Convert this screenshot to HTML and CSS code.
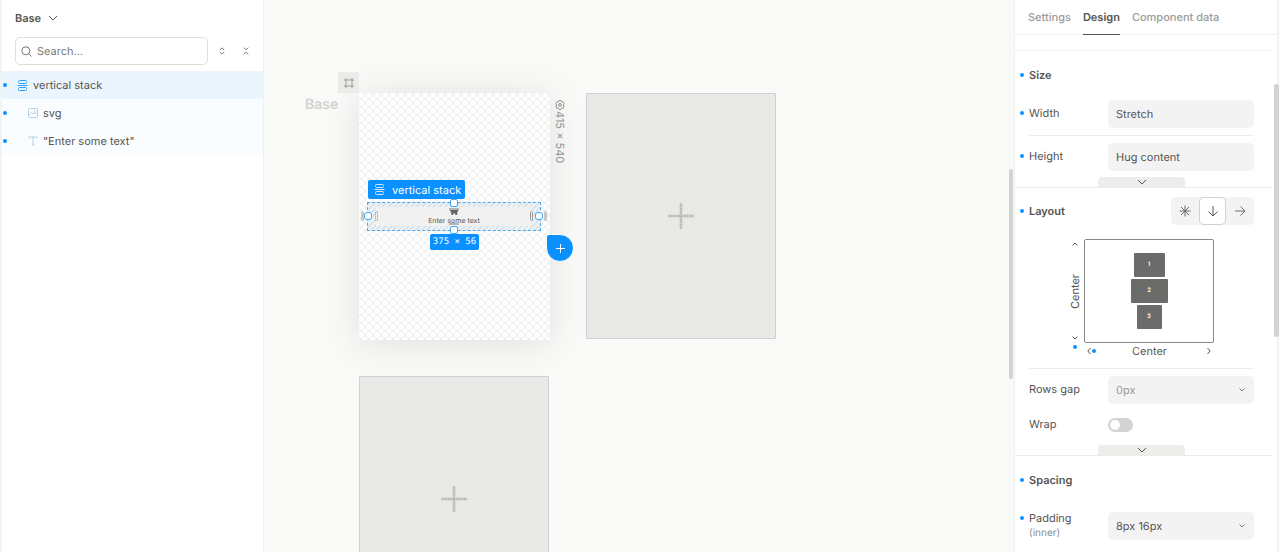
FILE: index.html
```html
<!DOCTYPE html>
<html lang="en">
<head>
    <meta charset="utf-8">
    <title>Component editor</title>
    <link rel="stylesheet" href="styles.css">
</head>
<body>
    <div class="editor">
        <aside class="tree-panel">
            <button class="base-button" type="button">
                Base
                <svg width="10" height="6" viewBox="0 0 10 6"><path d="M1 1l4 4 4-4"/></svg>
            </button>

            <div class="search-row">
                <label class="search-box">
                    <svg width="11" height="11" viewBox="0 0 11 11"><circle cx="4.8" cy="4.8" r="4"/><path d="M7.8 7.8l2.7 2.7"/></svg>
                    <input type="text" placeholder="Search..." aria-label="Search">
                </label>
                <button type="button" class="icon-button" aria-label="Expand all">
                    <svg width="6" height="8" viewBox="0 0 6 8"><path d="M.8 3L3 .8 5.200 3M.8 5L3 7.200 5.200 5"/></svg>
                </button>
                <button type="button" class="icon-button" aria-label="Collapse all">
                    <svg width="6" height="8" viewBox="0 0 6 8"><path d="M.8.6L3 2.800 5.200.6M.8 7.400L3 5.200l2.200 2.200"/></svg>
                </button>
            </div>

            <ul class="tree">
                <li class="tree-item selected">
                    <svg width="11" height="11" viewBox="0 0 11 11"><rect x="1.500" y=".5" width="8" height="3" rx="1"/><rect x="1.500" y="7.500" width="8" height="3" rx="1"/><path d="M.5 5.500h10"/></svg>
                    vertical stack
                </li>
                <li class="tree-item child">
                    <svg width="10" height="10" viewBox="0 0 10 10"><rect x=".5" y=".5" width="9" height="9" rx="1"/><path d="M1 7l2.500-2.500L5 6l2-1.500L9 6"/><path d="M6 3h1.500"/></svg>
                    svg
                </li>
                <li class="tree-item child">
                    <svg width="10" height="10" viewBox="0 0 10 10"><path d="M1 2.500V1h8v1.500M5 1v8M3.500 9h3"/></svg>
                    "Enter some text"
                </li>
            </ul>
        </aside>

        <main class="canvas">
            <div class="artboard">
                <div class="selection">
                    <div class="selection-fill"></div>
                    <svg class="paw" width="10" height="7" viewBox="0 0 10 7"><path d="M0 1h10L8.500 4 8 7H6.500L6 5.500H4.500L4 7H2.500L2 4z"/></svg>
                    <span class="selection-text">Enter some text</span>
                    <i class="spacer top"></i>
                    <i class="spacer bottom"></i>
                    <i class="margin-bar left"></i>
                    <i class="margin-bar right"></i>
                    <i class="padding-bar left"></i>
                    <i class="padding-bar right"></i>
                    <i class="handle top"></i>
                    <i class="handle bottom"></i>
                    <i class="handle left"></i>
                    <i class="handle right"></i>
                </div>
                <div class="selection-label">
                    <svg width="11" height="11" viewBox="0 0 11 11"><rect x="1.500" y=".5" width="8" height="3" rx="1"/><rect x="1.500" y="7.500" width="8" height="3" rx="1"/><path d="M.5 5.500h10"/></svg>
                    vertical stack
                </div>
                <div class="selection-size">375 × 56</div>
                <button type="button" class="add-button" aria-label="Add">
                    <svg width="9" height="9" viewBox="0 0 9 9"><path d="M4.500 0v9M0 4.500h9"/></svg>
                </button>
            </div>

            <div class="frame-icon">
                <svg width="10" height="10" viewBox="0 0 10 10"><path d="M2 0v10M8 0v10M0 2h10M0 8h10"/></svg>
            </div>
            <div class="frame-name">Base</div>

            <div class="frame-size">
                <svg width="10" height="10" viewBox="0 0 10 10"><path d="M4 .6h2l.5 1.200 1.600-.1 1 1.700L8.300 5l.8 1.600-1 1.700-1.600-.1L6 9.400H4l-.5-1.200-1.600.1-1-1.700L1.700 5 .9 3.400l1-1.700 1.600.1z"/><circle cx="5" cy="5" r="1.400"/></svg>
                <span>415 × 540</span>
            </div>

            <button type="button" class="empty-frame first" aria-label="Add breakpoint">
                <svg width="26" height="26" viewBox="0 0 26 26"><path class="wide" d="M13 0v26M0 13h26"/><path class="dots" d="M13 1v25M1 13h25"/></svg>
            </button>
            <button type="button" class="empty-frame second" aria-label="Add breakpoint">
                <svg width="26" height="26" viewBox="0 0 26 26"><path class="wide" d="M13 0v26M0 13h26"/><path class="dots" d="M13 1v25M1 13h25"/></svg>
            </button>
            <div class="canvas-scroll"></div>
        </main>

        <aside class="props-panel">
            <nav class="tabs">
                <button type="button">Settings</button>
                <button type="button" class="active">Design</button>
                <button type="button">Component data</button>
            </nav>
            <div class="panel-top"></div>

            <section class="section">
                <h2 class="title changed">Size</h2>
                <div class="row">
                    <label class="changed" for="width">Width</label>
                    <input class="field" id="width" type="text" value="Stretch">
                </div>
                <hr>
                <div class="row">
                    <label class="changed" for="height">Height</label>
                    <input class="field" id="height" type="text" value="Hug content">
                </div>
                <button type="button" class="more" aria-label="More size options">
                    <svg width="10" height="6" viewBox="0 0 10 6"><path d="M1 1l4 4 4-4"/></svg>
                </button>
            </section>

            <section class="section">
                <div class="layout-head">
                    <h2 class="title changed">Layout</h2>
                    <div class="segment">
                        <button type="button" aria-label="Absolute">
                            <svg width="12" height="12" viewBox="0 0 12 12"><path d="M6 .5v11M.5 6h11M2 2l8 8M10 2l-8 8"/></svg>
                        </button>
                        <button type="button" class="active" aria-label="Vertical">
                            <svg width="12" height="12" viewBox="0 0 12 12"><path d="M6 1v10M1.500 6.500L6 11l4.500-4.500"/></svg>
                        </button>
                        <button type="button" aria-label="Horizontal">
                            <svg width="12" height="12" viewBox="0 0 12 12"><path d="M1 6h10M6.500 1.500L11 6l-4.500 4.500"/></svg>
                        </button>
                    </div>
                </div>

                <div class="align">
                    <div class="align-vertical">
                        <svg width="6" height="4" viewBox="0 0 6 4"><path d="M.5 3.500L3 1l2.500 2.500"/></svg>
                        <span>Center</span>
                        <svg width="6" height="4" viewBox="0 0 6 4"><path d="M.5.5L3 3 5.500.5"/></svg>
                    </div>
                    <div class="align-box">
                        <span class="block one">1</span>
                        <span class="block two">2</span>
                        <span class="block three">3</span>
                    </div>
                    <i class="dot"></i>
                    <div class="align-horizontal">
                        <svg width="4" height="8" viewBox="0 0 4 8"><path d="M3.500 1L.8 4l2.700 3"/></svg>
                        <i class="dot"></i>
                        <span>Center</span>
                        <svg width="4" height="8" viewBox="0 0 4 8"><path d="M.5 1l2.700 3L.5 7"/></svg>
                    </div>
                </div>
                <hr>
                <div class="row">
                    <label for="gap">Rows gap</label>
                    <select class="field muted" id="gap"><option>0px</option></select>
                    <svg class="arrow" width="6" height="4" viewBox="0 0 6 4"><path d="M.5.5L3 3 5.500.5"/></svg>
                </div>
                <div class="row wrap-row">
                    <label for="wrap">Wrap</label>
                    <input class="switch" id="wrap" type="checkbox">
                </div>
                <button type="button" class="more" aria-label="More layout options">
                    <svg width="10" height="6" viewBox="0 0 10 6"><path d="M1 1l4 4 4-4"/></svg>
                </button>
            </section>

            <section class="section">
                <h2 class="title changed">Spacing</h2>
                <div class="row padding-row">
                    <label class="changed" for="padding">Padding <small>(inner)</small></label>
                    <select class="field" id="padding"><option>8px 16px</option></select>
                    <svg class="arrow" width="6" height="4" viewBox="0 0 6 4"><path d="M.5.5L3 3 5.500.5"/></svg>
                </div>
            </section>
            <div class="panel-scroll"></div>
        </aside>
    </div>
</body>
</html>
```

FILE: styles.css
```css
* {
    box-sizing: border-box;
}
body {
    margin: 0;
    font-family: Inter, "Liberation Sans", sans-serif;
    font-size: 11px;
    line-height: 16px;
    text-rendering: geometricPrecision;
    color: #555553;
    background: #fff;
}
button, input, select {
    font: inherit;
    color: inherit;
    text-rendering: inherit;
    margin: 0;
    padding: 0;
    border: 0;
    background: none;
}
svg {
    display: block;
    flex: none;
    fill: none;
    stroke: currentColor;
}
.editor {
    display: flex;
    height: 100vh;
    overflow: hidden;
}

/* left panel */
.tree-panel {
    flex: none;
    width: 264px;
    border-left: 2px solid #f3f3f2;
    border-right: 1px solid #f1f1f0;
}
.base-button {
    display: flex;
    align-items: center;
    gap: 7px;
    margin: 10px 0 11px 13px;
    font-weight: 600;
}
.search-row {
    display: flex;
    align-items: center;
    gap: 10px;
    padding: 0 10px 0 13px;
    margin-bottom: 6px;
}
.search-box {
    display: flex;
    flex: 1;
    align-items: center;
    gap: 5px;
    height: 28px;
    margin-right: -3px;
    padding: 0 5px;
    border: 1px solid #dededc;
    border-radius: 5px;
    color: #777775;
}
.search-box input {
    flex: 1;
    width: 0;
    outline: 0;
}
.search-box input::placeholder {
    color: #777775;
}
.icon-button {
    display: flex;
    justify-content: center;
    width: 14px;
    color: #777775;
}
.tree {
    margin: 0;
    padding: 0;
    list-style: none;
}
.tree-item {
    display: flex;
    align-items: center;
    gap: 5px;
    height: 28px;
    background: #fafdff;
}
.tree-item::before {
    content: "";
    width: 4px;
    height: 4px;
    margin: 0 5px 0 1px;
    border-radius: 50%;
    background: #0b91ff;
}
.tree-item svg {
    color: #b4d1e5;
}
.tree-item.child::before {
    margin-right: 16px;
}
.tree-item.selected {
    background: #ebf5fe;
}
.tree-item.selected svg {
    color: #2c9fff;
}

/* canvas */
.canvas {
    position: relative;
    flex: 1;
    overflow: hidden;
    background: #f9f9f8;
}
.frame-icon {
    position: absolute;
    left: 74px;
    top: 72px;
    display: flex;
    align-items: center;
    justify-content: center;
    width: 21px;
    height: 21px;
    border-radius: 2px 2px 0 0;
    background: #ebebea;
    color: #9b9b99;
}
.frame-name {
    position: absolute;
    left: 41px;
    top: 97px;
    font-size: 14px;
    font-weight: 600;
    color: #d3d3d1;
}
.artboard {
    position: absolute;
    left: 95px;
    top: 93px;
    width: 191px;
    height: 247px;
    background: repeating-conic-gradient(#f3f3f3 0 25%, #fff 0 50%) 0 0 / 8px 8px;
    box-shadow: 0 3px 32px rgba(0, 0, 0, 0.1);
}
.frame-size {
    position: absolute;
    left: 288px;
    top: 100px;
    display: flex;
    flex-direction: column;
    align-items: center;
    gap: 1px;
    width: 16px;
    color: #929290;
}
.frame-size span {
    writing-mode: vertical-rl;
    text-orientation: sideways;
}
.selection {
    position: absolute;
    left: 8px;
    top: 109px;
    width: 174px;
    height: 29px;
    border: 1px dashed #4aabf5;
    background: repeating-linear-gradient(135deg, #dce5eb 0 2px, #f0f1f1 2px 4px);
}
.selection-fill {
    position: absolute;
    inset: 4px 8px;
    background: #f1f1f1;
}
.paw {
    position: absolute;
    left: 81px;
    top: 5px;
    fill: #666664;
    stroke: none;
}
.selection-text {
    position: absolute;
    left: 0;
    right: 0;
    top: 13px;
    font-size: 7px;
    line-height: 10px;
    text-align: center;
}
.handle, .spacer, .margin-bar, .padding-bar {
    position: absolute;
}
.handle {
    width: 8px;
    height: 8px;
    border: 1px solid #3fa7f8;
    border-radius: 3px;
    background: #fff;
}
.handle.top, .handle.bottom {
    left: 82px;
    border-radius: 2px;
}
.handle.top {
    top: -4px;
}
.handle.bottom {
    bottom: -4px;
}
.handle.left {
    left: -4px;
    top: 9px;
}
.handle.right {
    right: -3px;
    top: 9px;
}
.spacer {
    left: 81px;
    width: 10px;
    height: 14px;
    border: solid #b4b4b2;
    border-width: 2px 0;
    border-radius: 1px;
}
.spacer.top {
    top: -7px;
}
.spacer.bottom {
    bottom: -7px;
}
.margin-bar {
    top: 8px;
    width: 3px;
    height: 10px;
    border-radius: 2px;
    background: #c7c7c5;
}
.margin-bar.left {
    left: -7px;
}
.margin-bar.right {
    right: -7px;
}
.padding-bar {
    top: 8px;
    width: 3px;
    height: 10px;
    border: 1px solid #969694;
    border-radius: 2px;
}
.padding-bar.left {
    left: 7px;
    border-style: dotted;
}
.padding-bar.right {
    right: 7px;
}
.selection-label {
    position: absolute;
    left: 9px;
    top: 87px;
    display: flex;
    align-items: center;
    gap: 7px;
    height: 19px;
    padding: 0 4px 0 6px;
    border-radius: 2px;
    background: #0b91ff;
    color: #fff;
    white-space: nowrap;
}
.selection-label svg {
    opacity: 0.8;
}
.selection-size {
    position: absolute;
    left: 71px;
    top: 141px;
    width: 49px;
    border-radius: 2px;
    background: #0b91ff;
    color: #fff;
    font-family: "DejaVu Sans Mono", monospace;
    font-size: 9px;
    text-align: center;
    white-space: nowrap;
}
.add-button {
    position: absolute;
    left: 187px;
    top: 141px;
    display: flex;
    align-items: center;
    justify-content: center;
    width: 28px;
    height: 28px;
    border: 1px solid #fff;
    border-radius: 3px 50% 50% 50%;
    background: #0b91ff;
    color: #fff;
}
.empty-frame {
    position: absolute;
    display: flex;
    align-items: center;
    justify-content: center;
    width: 190px;
    height: 246px;
    border: 1px solid #cfd1d0;
    border-radius: 1px;
    background: #e9e9e8;
}
.empty-frame.first {
    left: 322px;
    top: 93px;
}
.empty-frame.second {
    left: 95px;
    top: 376px;
}
.empty-frame .wide {
    stroke: #d0d0ce;
    stroke-width: 3;
}
.empty-frame .dots {
    stroke: #969694;
    stroke-dasharray: 1 1;
}
.canvas-scroll {
    position: absolute;
    right: 1px;
    top: 169px;
    width: 4px;
    height: 210px;
    border-radius: 2px;
    background: #d3d3d2;
}

/* right panel */
.props-panel {
    position: relative;
    flex: none;
    width: 266px;
    padding-right: 3px;
    border-left: 1px solid #f1f1f0;
    background: linear-gradient(to left, #fafafa 2px, #eeeeed 2px 3px, #fff 3px);
}
.tabs {
    display: flex;
    gap: 12px;
    height: 35px;
    padding-left: 13px;
    border-bottom: 1px solid #f1f1f0;
    font-weight: 500;
    color: #9b9b99;
}
.tabs button {
    height: 35px;
    border-bottom: 1px solid transparent;
}
.tabs .active {
    border-color: #555553;
    color: #555553;
    font-weight: 600;
}
.panel-top {
    height: 16px;
    margin-right: 5px;
    border-bottom: 1px solid #f1f1f0;
}
.section {
    margin-right: 5px;
    padding: 16px 18px 0 5px;
    border-bottom: 1px solid #ececeb;
}
.section:last-of-type {
    border: 0;
}
.section hr {
    height: 1px;
    margin: 7px 0 7px 9px;
    border: 0;
    background: #ececeb;
}
.title, .row label {
    position: relative;
    padding-left: 9px;
}
.title {
    margin: 0 0 17px;
    font-size: 11px;
    font-weight: 600;
}
.changed::before {
    content: "";
    position: absolute;
    left: 0;
    top: 6px;
    width: 4px;
    height: 4px;
    border-radius: 50%;
    background: #0b91ff;
}
.row {
    position: relative;
    display: flex;
    align-items: center;
    min-height: 28px;
}
.row label {
    width: 88px;
    padding-bottom: 2px;
}
.row small {
    display: block;
    font-size: 10px;
    line-height: 14px;
    color: #8d8d8b;
}
.field {
    flex: 1;
    min-width: 0;
    height: 28px;
    padding: 0 8px;
    border-radius: 5px;
    background: #f3f3f3;
    appearance: none;
}
.muted {
    color: #989896;
}
.arrow {
    position: absolute;
    right: 9px;
    color: #777775;
    pointer-events: none;
}
.more {
    display: flex;
    align-items: center;
    justify-content: center;
    width: 87px;
    height: 10px;
    margin: 6px 0 0 78px;
    border-radius: 4px 4px 0 0;
    background: #ededec;
}
.layout-head {
    display: flex;
    align-items: center;
    justify-content: space-between;
    margin: -7px 0 14px;
}
.layout-head .title {
    margin: 0;
}
.segment {
    display: flex;
    height: 28px;
    border-radius: 5px;
    background: #f3f3f3;
}
.segment button {
    display: flex;
    align-items: center;
    justify-content: center;
    width: 28px;
    border: 1px solid transparent;
    border-radius: 5px;
    color: #6b6b69;
}
.segment .active {
    width: 27px;
    border-color: #d0d1d0;
    background: #fff;
    color: #555553;
}
.align {
    display: grid;
    grid-template-columns: 10px 130px;
    column-gap: 4px;
    margin: 0 40px 10px 50px;
}
.align-vertical {
    display: flex;
    flex-direction: column;
    align-items: center;
    justify-content: space-between;
    padding: 3px 0;
}
.align-vertical span {
    writing-mode: vertical-rl;
    transform: rotate(180deg);
}
.align-box {
    display: flex;
    flex-direction: column;
    align-items: center;
    justify-content: center;
    gap: 2px;
    height: 104px;
    border: 1px solid #888886;
    border-radius: 2px;
}
.block {
    width: 31px;
    height: 24px;
    border-radius: 1px;
    background: #6b6b69;
    color: #fff;
    font-size: 6px;
    font-weight: 600;
    line-height: 24px;
    text-align: center;
}
.block.two {
    width: 37px;
}
.block.three {
    width: 25px;
}
.dot {
    width: 4px;
    height: 4px;
    border-radius: 50%;
    background: #0b91ff;
}
.align > .dot {
    justify-self: center;
    margin-top: 2px;
}
.align-horizontal {
    display: flex;
    align-items: center;
    padding: 0 3px;
    height: 15px;
}
.align-horizontal .dot {
    margin: 0 -4px 0 1px;
}
.align-horizontal span {
    flex: 1;
    text-align: center;
}
.wrap-row {
    margin-top: 7px;
}
.switch {
    display: flex;
    align-items: center;
    width: 25px;
    height: 14px;
    padding: 0 2px;
    border-radius: 7px;
    background: #d3d3d2;
    appearance: none;
}
.switch::before {
    content: "";
    width: 10px;
    height: 10px;
    border-radius: 50%;
    background: #fff;
}
.padding-row {
    margin-top: 22px;
}
.panel-scroll {
    position: absolute;
    right: 1px;
    top: 84px;
    width: 5px;
    height: 253px;
    border-radius: 3px;
    background: #d3d3d2;
}
```
